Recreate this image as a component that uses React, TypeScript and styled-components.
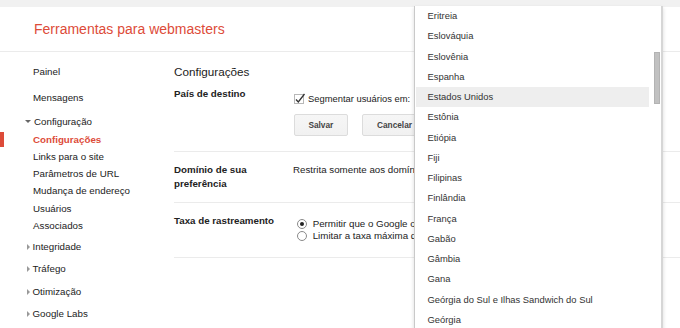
import React from 'react';
import styled, { createGlobalStyle } from 'styled-components';

const GlobalStyle = createGlobalStyle`
  html, body {
    margin: 0;
    padding: 0;
    background: #fff;
  }
  body {
    font-family: 'Liberation Sans', Arial, sans-serif;
    color: #222;
  }
`;

const Page = styled.div`
  position: relative;
  width: 680px;
  height: 328px;
  overflow: hidden;
  background: #fff;
`;

const TopStrip = styled.div`
  height: 7px;
  background: #f1f1f1;
`;

const Header = styled.div`
  height: 44px;
  line-height: 44px;
  padding-left: 34px;
  border-bottom: 1px solid #ebebeb;
`;

const Title = styled.span`
  font-size: 14px;
  color: #dd4b39;
`;

const Body = styled.div`
  display: flex;
`;

const Sidebar = styled.nav`
  width: 174px;
  flex-shrink: 0;
  padding-top: 10.8px;
  font-size: 9.75px;
`;

const NavItem = styled.div<{ $h?: number; $gap?: number; $top?: number; $active?: boolean }>`
  position: relative;
  display: flex;
  align-items: center;
  height: ${p => p.$h ?? 17}px;
  line-height: ${p => p.$h ?? 17}px;
  margin-top: ${p => p.$top ?? 0}px;
  margin-bottom: ${p => p.$gap ?? 0}px;
  padding-left: 33px;
  color: ${p => (p.$active ? '#dd4b39' : '#222')};
  font-weight: ${p => (p.$active ? 'bold' : 'normal')};
  white-space: nowrap;

  &::before {
    content: '';
    display: ${p => (p.$active ? 'block' : 'none')};
    position: absolute;
    left: 0;
    top: 1.5px;
    width: 4px;
    height: 14.4px;
    background: #dd4b39;
  }
`;

const Caret = styled.span<{ $open?: boolean }>`
  display: inline-block;
  width: 0;
  height: 0;
  margin-left: ${p => (p.$open ? -8 : -6.5)}px;
  margin-right: 3px;
  ${p =>
    p.$open
      ? `border-left: 3px solid transparent;
         border-right: 3px solid transparent;
         border-top: 3.5px solid #666;`
      : `border-top: 3px solid transparent;
         border-bottom: 3px solid transparent;
         border-left: 3.5px solid #999;`}
`;

const Main = styled.main`
  flex: 1;
  padding-top: 12px;
  font-size: 9.75px;
`;

const Heading = styled.h1`
  margin: 0 0 6.6px;
  font-size: 11.7px;
  line-height: 16px;
  font-weight: normal;
  color: #222;
`;

const Row = styled.div<{ $pt: number; $pb: number }>`
  display: grid;
  grid-template-columns: 119px 121px 1fr;
  padding-top: ${p => p.$pt}px;
  padding-bottom: ${p => p.$pb}px;
  border-bottom: 1px solid #ebebeb;
`;

const Label = styled.div`
  font-weight: bold;
  line-height: 14px;
  color: #222;
`;

const Value = styled.div<{ $pt?: number }>`
  padding-top: ${p => p.$pt ?? 0}px;
  line-height: 14px;
  white-space: nowrap;
  overflow: hidden;
  color: #222;
`;

const CheckLine = styled.label`
  display: flex;
  align-items: center;
  height: 14px;
  font-size: 9.4px;
  gap: 2px;
`;

const Buttons = styled.div`
  display: flex;
  gap: 14.3px;
  margin-top: 8.7px;
  margin-left: 1px;
`;

const Button = styled.button<{ $w: number }>`
  flex-shrink: 0;
  width: ${p => p.$w}px;
  height: 21.4px;
  padding: 0;
  font-family: inherit;
  font-size: 8.3px;
  font-weight: bold;
  color: #444;
  background: linear-gradient(#f6f6f6, #f1f1f1);
  border: 1px solid #dcdcdc;
  border-radius: 2px;
`;

const RadioLine = styled.label`
  display: flex;
  align-items: center;
  height: 12.5px;
  padding-left: 3.7px;
  gap: 6px;
`;

const Radio = styled.span<{ $on?: boolean }>`
  box-sizing: border-box;
  flex-shrink: 0;
  display: inline-flex;
  align-items: center;
  justify-content: center;
  width: 10px;
  height: 10px;
  border-radius: 50%;
  border: 1px solid #8a8a8a;
  background: #fff;

  &::after {
    content: '';
    display: ${p => (p.$on ? 'block' : 'none')};
    width: 4px;
    height: 4px;
    border-radius: 50%;
    background: #222;
  }
`;

const Dropdown = styled.div`
  position: absolute;
  left: 414px;
  top: 6px;
  width: 249px;
  height: 330px;
  box-sizing: border-box;
  display: flex;
  background: #fff;
  border-left: 1px solid #c9c9c9;
  border-right: 2px solid #d6d6d6;
  box-shadow: 0 2px 4px rgba(0, 0, 0, 0.15);
`;

const List = styled.ul`
  flex: 1;
  margin: 0;
  padding: 0 4px 0 1px;
  list-style: none;
`;

const Option = styled.li<{ $hover?: boolean }>`
  height: 20.25px;
  line-height: 20.25px;
  padding-left: 11.5px;
  font-size: 9.4px;
  color: #333;
  white-space: nowrap;
  background: ${p => (p.$hover ? '#eeeeee' : 'transparent')};
`;

const Track = styled.div`
  width: 8px;
  padding-top: 45.7px;
  display: flex;
  justify-content: center;
`;

const Thumb = styled.div`
  width: 6px;
  height: 52px;
  box-sizing: border-box;
  background: #c1c1c1;
  border: 1px solid #b3b3b3;
`;

const countries = [
  'Eritreia',
  'Eslováquia',
  'Eslovênia',
  'Espanha',
  'Estados Unidos',
  'Estônia',
  'Etiópia',
  'Fiji',
  'Filipinas',
  'Finlândia',
  'França',
  'Gabão',
  'Gâmbia',
  'Gana',
  'Geórgia do Sul e Ilhas Sandwich do Sul',
  'Geórgia',
];

const CheckIcon = () => (
  <svg width="13" height="12" viewBox="0 0 13 12">
    <rect x="1.5" y="1.5" width="9" height="9" fill="#fff" stroke="#b8b8b8" />
    <path d="M3 6.5 L5.3 9 L11.5 1" fill="none" stroke="#333" strokeWidth="1.3" />
  </svg>
);

const subItems = ['Links para o site', 'Parâmetros de URL', 'Mudança de endereço', 'Usuários', 'Associados'];
const groups = ['Integridade', 'Tráfego', 'Otimização', 'Google Labs'];

const App: React.FC = () => {
  return (
    <Page>
      <GlobalStyle />
      <TopStrip />
      <Header>
        <Title>Ferramentas para webmasters</Title>
      </Header>
      <Body>
        <Sidebar>
          <NavItem $gap={9.6}>Painel</NavItem>
          <NavItem $gap={7}>Mensagens</NavItem>
          <NavItem $gap={0.4}>
            <Caret $open />
            Configuração
          </NavItem>
          <NavItem $h={17.2} $active>Configurações</NavItem>
          {subItems.map(s => (
            <NavItem key={s} $h={17.2}>{s}</NavItem>
          ))}
          {groups.map((g, i) => (
            <NavItem key={g} $h={22.5} $top={i === 0 ? 1.6 : 0}>
              <Caret />
              {g}
            </NavItem>
          ))}
        </Sidebar>
        <Main>
          <Heading>Configurações</Heading>
          <Row $pt={0} $pb={15.8}>
            <Label>País de destino</Label>
            <Value $pt={5}>
              <CheckLine>
                <CheckIcon />
                Segmentar usuários em:
              </CheckLine>
              <Buttons>
                <Button $w={53.7}>Salvar</Button>
                <Button $w={65}>Cancelar</Button>
              </Buttons>
            </Value>
          </Row>
          <Row $pt={11} $pb={10.2}>
            <Label>
              Domínio de sua
              <br />
              preferência
            </Label>
            <Value>Restrita somente aos domínios www</Value>
          </Row>
          <Row $pt={11} $pb={14.7}>
            <Label>Taxa de rastreamento</Label>
            <Value $pt={3.6}>
              <RadioLine>
                <Radio $on />
                Permitir que o Google otimize para meu site
              </RadioLine>
              <RadioLine>
                <Radio />
                Limitar a taxa máxima de rastreamento
              </RadioLine>
            </Value>
          </Row>
        </Main>
      </Body>
      <Dropdown>
        <List>
          {countries.map(c => (
            <Option key={c} $hover={c === 'Estados Unidos'}>
              {c}
            </Option>
          ))}
        </List>
        <Track>
          <Thumb />
        </Track>
      </Dropdown>
    </Page>
  );
};

export default App;
